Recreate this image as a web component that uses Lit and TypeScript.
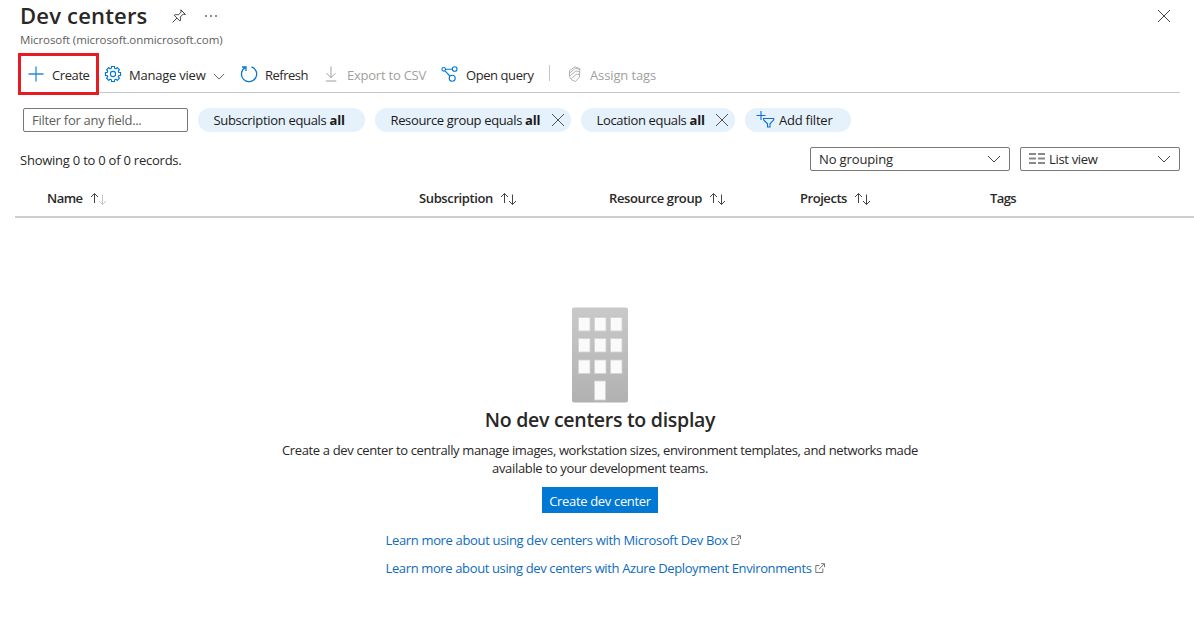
import { LitElement, html, css, svg, nothing } from "lit";
import { customElement, property, query } from "lit/decorators.js";

/** A single line of text that tracks its letters to fill a given measure. */
@customElement("ui-text")
class UiText extends LitElement {
  static styles = css`
    :host { display: inline-block; white-space: pre; flex: none; }
  `;
  @property() text = "";
  @property({ type: Number }) measure = 0;
  @query("span") span!: HTMLSpanElement;

  updated() {
    if (!this.measure) return;
    this.span.style.letterSpacing = "0px";
    const natural = this.span.getBoundingClientRect().width;
    this.span.style.letterSpacing = `${(this.measure - natural) / this.text.length}px`;
    this.style.width = `${this.measure}px`;
  }
  render() {
    return html`<span>${this.text}</span>`;
  }
}

const t = (text: string, measure: number) =>
  html`<ui-text .text=${text} .measure=${measure}></ui-text>`;

const icon = (w: number, h: number, body: unknown, cls = "") =>
  html`<svg class="icon ${cls}" width=${w} height=${h} viewBox="0 0 ${w} ${h}">${body}</svg>`;

const gearPath = () => {
  const pts: string[] = [];
  for (let i = 0; i < 8; i++) {
    const a = (i * Math.PI) / 4;
    for (const [d, r] of [[-0.27, 6], [-0.2, 7.7], [0.2, 7.7], [0.27, 6]]) {
      pts.push(`${(8 + r * Math.sin(a + d)).toFixed(2)} ${(8 - r * Math.cos(a + d)).toFixed(2)}`);
    }
  }
  return `M${pts.join("L")}Z`;
};

const pin = icon(16, 16, svg`<path d="M1.5 14.5 6 10M3.2 7.3c1.400-.9 2.700-.9 4-.3l3-3-.4-2.200 4.700 4.700-2.300-.4-3 3c.6 1.300.6 2.600-.3 4Z"/>`);
const plus = icon(16, 16, svg`<path d="M8 .5v15M.5 8h15"/>`, "plus");
const gear = icon(16, 16, svg`<path d=${gearPath()}/><circle cx="8" cy="8" r="2.600"/>`, "blue");
const refresh = icon(18, 18, svg`<path d="M11.500 1.900A7.600 7.600 0 1 1 5.300 2.500M2 2h4v4"/>`, "blue refresh");
const download = icon(12, 16, svg`<path d="M6 .5v11M1.500 7.200 6 11.700l4.500-4.500M.8 15h10.500"/>`, "pale");
const graph = icon(17, 16, svg`<circle cx="2.700" cy="3.300" r="1.800"/><circle cx="13.700" cy="3" r="2.300"/><circle cx="11.200" cy="12.200" r="3"/><path d="M4.500 3.300h6.900M4 4.800l4.900 5.200"/>`, "blue");
const tags = icon(13, 17, svg`<path d="M1.500 7.200 7.500 2.200l4 1.300M1.500 10.200 8 4.900l3.500 1M3.500 12.500 8.700 8l3 .8M1.500 10.500V4.700L7 .8l4.800 1.800L11.500 11 7.500 15.500 3.500 13.800Z"/>`, "pale tags");
const cross = icon(14, 14, svg`<path d="M1 1l12 12M13 1 1 13"/>`);
const chevron = icon(14, 8, svg`<path d="M1 1l6 6 6-6"/>`);
const funnel = icon(19, 17, svg`<path d="M5 0v9M.5 4.500h9M7.500 7.500h10.200v1.400L14 12.800V16h-2.500v-3.200L7.700 9Z"/>`, "blue");
const list = icon(16, 11, svg`<path d="M0 1h7M9 1h7M0 5.500h7M9 5.500h7M0 10h7M9 10h7"/>`, "list");
const external = icon(10, 10, svg`<path d="M4.500 2.500H.8v7h7V5.500M6 .7h3.500V4.200M9.500.7 4 6.200"/>`, "ext");
const sort = (pale: boolean) => html`<svg class="icon sort" width="17" height="14" viewBox="0 0 17 14">
  <path d="M4.500 11V1.500M1 5l3.500-3.500L8 5"/><path class=${pale ? "dim" : ""} d="M12.500 2.500v10M9 9l3.500 3.500L16 9"/>
</svg>`;

const building = html`<svg class="building" width="56" height="96" viewBox="0 0 56 96">
  <defs><linearGradient id="wall" x1="0" y1="0" x2="0" y2="1">
    <stop offset="0" stop-color="#c9c9c9"/><stop offset="1" stop-color="#b1b1b1"/>
  </linearGradient></defs>
  <rect y=".5" width="56" height="95" rx="2" fill="url(#wall)"/>
  ${[10.5, 31.5, 53].map((y) => [6.5, 22.5, 38.500].map((x) =>
    svg`<rect x=${x} y=${y} width="11.500" height="13.500" fill="#fafafa" stroke="#d3d3d3" stroke-width=".8"/>`))}
  <rect x="22.500" y="74" width="11" height="19" fill="#fafafa" stroke="#d3d3d3" stroke-width=".8"/>
</svg>`;

interface Pill { label: string; labelWidth: number; width: number; closable: boolean; }
const pills: Pill[] = [
  { label: "Subscription equals ", labelWidth: 116, width: 167, closable: false },
  { label: "Resource group equals ", labelWidth: 134.5, width: 196, closable: true },
  { label: "Location equals ", labelWidth: 93, width: 154, closable: true },
];

const columns = [
  { name: "Name", measure: 35.5, sort: "dim" },
  { name: "Subscription", measure: 74, sort: "full" },
  { name: "Resource group", measure: 93, sort: "full" },
  { name: "Projects", measure: 47, sort: "full" },
  { name: "Tags", measure: 26, sort: "" },
];

@customElement("app-root")
class AppRoot extends LitElement {
  static styles = css`
    :host {
      display: block; box-sizing: border-box; width: 1194px; height: 619px; overflow: hidden;
      background: #fff; color: #292827;
      font: 13px/18px "Open Sans", "Noto Sans", sans-serif;
    }
    * { box-sizing: border-box; }
    .icon { flex: none; fill: none; stroke: #444; stroke-width: 1; overflow: visible; }
    .blue { stroke: #0078d4; stroke-width: 1.100; }
    .plus { stroke: #2b8ad8; stroke-width: 1.300; }
    .refresh { stroke-width: 1.300; }
    .pale { stroke: #a19f9d; }
    .tags { stroke-width: .8; }
    .list { stroke: #8a8886; stroke-width: 2; }
    .ext { stroke: #797775; stroke-width: 1; }
    .title { display: flex; align-items: center; height: 32px; padding: 0 23px 0 20px; }
    .title h1 { margin: 0; font-size: 22px; line-height: 30px; font-weight: 600; width: 151px; height: 33px; }
    .dots { margin-left: 18px; display: flex; gap: 3px; }
    .dots i { width: 2px; height: 2px; background: #666; border-radius: 1px; }
    .title .close { margin-left: auto; display: flex; }
    .tenant { height: 21px; padding: 0 20px; font-size: 11.500px; line-height: 16px; color: #605e5c; }
    .toolbar { display: flex; align-items: center; height: 40px; margin: 0 14px 0 18px; position: relative; }
    .toolbar::after { content: ""; position: absolute; left: 2px; right: 0; bottom: 0; height: 1px; background: #c8c6c4; }
    .create { display: flex; align-items: center; gap: 8px; width: 81px; height: 42px; align-self: flex-start;
      border: 3px solid #e81b23; padding: 2px 0 0 7px; z-index: 1; background: #fff; }
    .cmd { display: flex; align-items: center; height: 40px; padding-top: 4px; gap: 8px; }
    .cmd .icon { margin-top: -2px; }
    .create .icon { margin-top: -2px; }
    .manage { margin-left: 6px; gap: 8px; }
    .manage .icon:last-child { width: 12px; height: 7px; margin-top: 2px; margin-left: -.5px; }
    .reload { margin-left: 14.500px; gap: 7.500px; }
    .export { margin-left: 16.500px; gap: 10.500px; color: #a19f9d; }
    .open { margin-left: 14.500px; gap: 8.500px; }
    .rule { width: 1px; height: 16px; background: #c8c6c4; margin-left: 15px; }
    .assign { margin-left: 18px; gap: 9.500px; color: #a19f9d; }
    .filters { display: flex; gap: 10px; padding: 15px 0 0 23px; }
    .field { width: 165px; height: 24px; border: 1px solid #7a7876; border-radius: 2px; padding: 2px 0 0 8px; color: #605e5c; line-height: 19px; }
    .pill { display: flex; align-items: center; height: 24px; border-radius: 12px; background: #e5f1fb; padding-left: 15.500px; color: #1b1a19; }
    .pill b { font-weight: 700; display: flex; }
    .pill .icon { margin-left: 10px; stroke: #555; }
    .pill.add { width: 106px; padding-left: 11px; }
    .pill.add .icon { margin: -1px 4px 0 0; stroke: #0f6cdb; }
    .summary { display: flex; height: 24px; margin-top: 15px; padding: 0 14px 0 20px; }
    .count { flex: 1; padding-top: 4px; }
    .select { display: flex; align-items: center; height: 24px; border: 1px solid #7a7876; border-radius: 2px; padding: 0 8px; }
    .select > .icon:last-child { margin-left: auto; }
    .group { width: 200px; }
    .view { width: 160px; margin-left: 10px; gap: 4px; }
    .view .list { margin-top: -2px; }
    .columns { display: grid; grid-template-columns: 372px 190px 191px 190px 1fr; height: 47px;
      margin-left: 15px; padding: 9px 0 0 32px; border-bottom: 2px solid #d0cecd; }
    .column { display: flex; align-items: center; gap: 7px; height: 36px; font-weight: 600; }
    .sort { margin-top: 1px; }
    .dim { stroke: #c8c6c4; }
    .empty { display: flex; flex-direction: column; align-items: center; width: 1200px; margin-top: 89px; }
    .building { display: block; }
    .empty h2 { margin: 3px 0 0; font-size: 19.500px; line-height: 27px; font-weight: 600; }
    .empty p { margin: 8px 0 0; display: flex; flex-direction: column; align-items: center; }
    button { width: 116px; height: 26px; margin-top: 10px; padding: 1px 0 0; border: 0; background: #0078d4; color: #fff; font: inherit; }
    .links { width: 429px; display: flex; flex-direction: column; gap: 10px; margin: 18px 0 0; color: #0f6cbd; }
    .links a { display: flex; align-items: center; gap: 3px; }
    .links .icon { margin-top: -1px; }
  `;

  render() {
    return html`
      <header class="title">
        <h1>${t("Dev centers", 127.5)}</h1>${pin}
        <span class="dots"><i></i><i></i><i></i></span>
        <span class="close">${cross}</span>
      </header>
      <div class="tenant">${t("Microsoft (microsoft.onmicrosoft.com)", 202.5)}</div>
      <nav class="toolbar">
        <div class="create">${plus}${t("Create", 37.5)}</div>
        <div class="cmd manage">${gear}${t("Manage view", 76.5)}${chevron}</div>
        <div class="cmd reload">${refresh}${t("Refresh", 43)}</div>
        <div class="cmd export">${download}${t("Export to CSV", 79)}</div>
        <div class="cmd open">${graph}${t("Open query", 67.5)}</div>
        <span class="rule"></span>
        <div class="cmd assign">${tags}${t("Assign tags", 66)}</div>
      </nav>
      <div class="filters">
        <div class="field">${t("Filter for any field...", 109.5)}</div>
        ${pills.map((p) => html`<div class="pill" style="width:${p.width}px">
          ${t(p.label, p.labelWidth)}<b>${t("all", 15.5)}</b>${p.closable ? cross : nothing}
        </div>`)}
        <div class="pill add">${funnel}${t("Add filter", 53.5)}</div>
      </div>
      <div class="summary">
        <div class="count">${t("Showing 0 to 0 of 0 records.", 161.5)}</div>
        <div class="select group">${t("No grouping", 74)}${chevron}</div>
        <div class="select view">${list}${t("List view", 48.5)}${chevron}</div>
      </div>
      <div class="columns">
        ${columns.map((c) => html`<div class="column">${t(c.name, c.measure)}${c.sort ? sort(c.sort === "dim") : nothing}</div>`)}
      </div>
      <main class="empty">
        ${building}
        <h2>${t("No dev centers to display", 230.5)}</h2>
        <p>
          ${t("Create a dev center to centrally manage images, workstation sizes, environment templates, and networks made", 636)}
          ${t("available to your development teams.", 216)}
        </p>
        <button>${t("Create dev center", 101.5)}</button>
        <div class="links">
          <a>${t("Learn more about using dev centers with Microsoft Dev Box", 342.5)}${external}</a>
          <a>${t("Learn more about using dev centers with Azure Deployment Environments", 426)}${external}</a>
        </div>
      </main>
    `;
  }
}
